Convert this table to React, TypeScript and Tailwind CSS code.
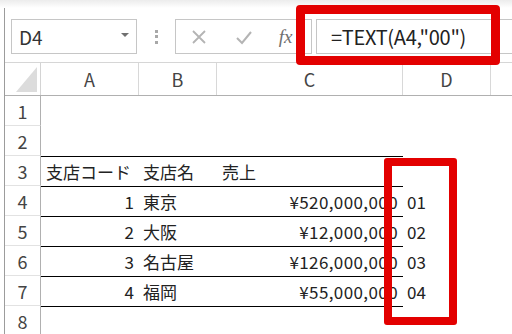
import React from "react";

const rows = [
  { n: 1 },
  { n: 2 },
  { n: 3, a: "支店コード", b: "支店名", c: "売上", head: true },
  { n: 4, a: "1", b: "東京", c: "¥520,000,000", d: "01" },
  { n: 5, a: "2", b: "大阪", c: "¥12,000,000", d: "02" },
  { n: 6, a: "3", b: "名古屋", c: "¥126,000,000", d: "03" },
  { n: 7, a: "4", b: "福岡", c: "¥55,000,000", d: "04" },
  { n: 8 },
];

export default function App() {
  return (
    <div className="w-[512px] h-[334px] overflow-hidden bg-white relative font-['Noto_Sans_CJK_JP',sans-serif] text-[#222]">
      <div className="h-[8px] bg-gradient-to-b from-[#ececec] to-white" />
      <div className="ml-[4px] border-l border-[#9c9c9c]">
        {/* formula bar */}
        <div className="h-[54px] flex items-start pt-[11px]">
          <div className="ml-[6px] w-[126px] h-[35px] border border-[#c6c6c6] flex items-center justify-between pl-[7px] pr-[7px]">
            <span className="text-[19px] leading-none text-[#333]">D4</span>
            <div className="w-0 h-0 border-l-[4px] border-r-[4px] border-t-[4px] border-l-transparent border-r-transparent border-t-[#707070] mb-[4px]" />
          </div>
          <div className="w-[38px] h-[35px] flex flex-col items-center justify-center gap-[2.5px]">
            <div className="w-[3px] h-[3px] bg-[#a8a8a8]" />
            <div className="w-[3px] h-[3px] bg-[#a8a8a8]" />
            <div className="w-[3px] h-[3px] bg-[#a8a8a8]" />
          </div>
          <div className="w-[137px] h-[35px] border border-[#c6c6c6] flex items-center">
            <div className="w-[45px] flex justify-center">
              <svg width="16" height="16" viewBox="0 0 16 16">
                <path d="M2 2 L14 14 M14 2 L2 14" stroke="#b4b4b4" strokeWidth="1.8" fill="none" />
              </svg>
            </div>
            <div className="w-[45px] flex justify-center">
              <svg width="18" height="16" viewBox="0 0 18 16">
                <path d="M2 9 L7 14 L16 3" stroke="#b4b4b4" strokeWidth="2" fill="none" />
              </svg>
            </div>
            <div className="flex-1 flex justify-center pr-[6px]">
              <span className="font-['Liberation_Serif',serif] italic text-[19px] leading-none text-[#707070]">
                fx
              </span>
            </div>
          </div>
          <div className="ml-[4px] flex-1 h-[35px] border border-r-0 border-[#c6c6c6] flex items-center pl-[14px]">
            <span className="text-[20px] leading-none text-[#222] tracking-[-0.3px]">=TEXT(A4,"00")</span>
          </div>
        </div>

        {/* column headers */}
        <div className="h-[34px] flex border-t border-b border-t-[#d6d6d6] border-b-[#b0b0b0] text-[18px] text-[#444]">
          <div className="w-[36px] border-r border-[#d4d4d4] flex items-end justify-end pr-[3px] pb-[3px]">
            <div className="w-0 h-0 border-l-[22px] border-t-[25px] border-l-transparent border-t-transparent border-b-0 border-r-0 relative">
              <div className="absolute right-0 bottom-0 w-0 h-0 border-l-[21px] border-b-[25px] border-l-transparent border-b-[#dcdcdc]" />
            </div>
          </div>
          <div className="w-[98px] border-r border-[#d8d8d8] flex items-center justify-center">A</div>
          <div className="w-[78px] border-r border-[#d8d8d8] flex items-center justify-center">B</div>
          <div className="w-[186px] border-r border-[#d8d8d8] flex items-center justify-center">C</div>
          <div className="w-[88px] border-r border-[#d8d8d8] flex items-center justify-center">D</div>
          <div className="flex-1" />
        </div>

        {/* rows */}
        {rows.map((r) => (
          <div key={r.n} className="h-[30px] flex text-[17px] leading-none">
            <div className="w-[36px] border-r border-b border-r-[#b0b0b0] border-b-[#e2e2e2] flex items-center justify-center text-[18px] text-[#444]">
              {r.n}
            </div>
            <div className={`flex ${r.n >= 3 ? "border-t border-black" : ""}`}>
              <div className={`w-[98px] flex items-center px-[5px] ${r.head ? "justify-start" : "justify-end"}`}>
                {r.a}
              </div>
              <div className="w-[78px] flex items-center px-[4px] whitespace-nowrap">{r.b}</div>
              <div className={`w-[186px] flex items-center px-[5px] whitespace-nowrap ${r.head ? "justify-start" : "justify-end"}`}>
                <span className={r.head ? "" : "tracking-[0.4px]"}>{r.c}</span>
              </div>
            </div>
            <div className="w-[88px] flex items-center px-[4px]">{r.d}</div>
          </div>
        ))}
      </div>

      {/* annotation boxes */}
      <div className="absolute left-[296px] top-[5px] w-[204px] h-[60px] border-[9px] border-[#e30000] rounded-[4px]" />
      <div className="absolute left-[384px] top-[158px] w-[73px] h-[167px] border-[8px] border-[#e30000] rounded-[3px]" />
    </div>
  );
}
